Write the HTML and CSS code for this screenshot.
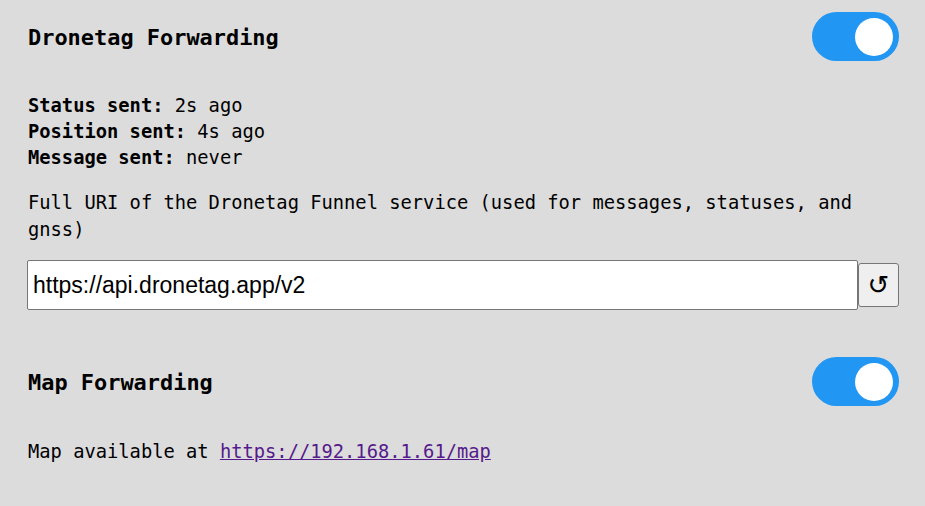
FILE: index.html
```html
<!DOCTYPE html>
<html lang="en">
  <head>
    <meta charset="UTF-8" />
    <meta name="viewport" content="width=device-width, initial-scale=1.0" />
    <title>Forwarding</title>
    <link rel="stylesheet" href="styles.css">
  </head>
  <body>
    <div class="section">
      <div class="section-header">
        <h3>Dronetag Forwarding</h3>
        <label class="toggle">
          <input type="checkbox" checked />
          <span class="slider"></span>
        </label>
      </div>
      <div class="status">
        <div><b>Status sent:</b> 2s ago</div>
        <div><b>Position sent:</b> 4s ago</div>
        <div><b>Message sent:</b> never</div>
      </div>
      <p class="hint">Full URI of the Dronetag Funnel service (used for messages, statuses, and gnss)</p>
      <div class="uri-row">
        <input type="text" class="uri-input" value="https://api.dronetag.app/v2" />
        <button class="reset-btn" title="Reset">↺</button>
      </div>
    </div>
    <div class="section section-map">
      <div class="section-header">
        <h3>Map Forwarding</h3>
        <label class="toggle">
          <input type="checkbox" checked />
          <span class="slider"></span>
        </label>
      </div>
      <p class="map-info">Map available at <a href="#map" class="visited">https://192.168.1.61/map</a></p>
    </div>
  </body>
</html>
```

FILE: styles.css
```css
body {
  font-family: "DejaVu Sans Mono", monospace;
  font-size: 18.75px;
  background-color: #dcdcdc;
  color: #000;
  margin: 0;
  padding: 12px 26px 0 27px;
}
.section-header {
  display: flex;
  justify-content: space-between;
  align-items: center;
  height: 49px;
}
.section-header h3 {
  margin: 2px 0 0 1px;
  font-size: 1.17em;
  font-weight: bold;
}
.toggle {
  position: relative;
  display: inline-block;
  width: 87px;
  height: 49px;
}
.toggle input {
  opacity: 0;
  width: 0;
  height: 0;
}
.slider {
  position: absolute;
  inset: 0;
  background-color: #2196f3;
  border-radius: 25px;
}
.slider::before {
  content: "";
  position: absolute;
  width: 38px;
  height: 38px;
  right: 6px;
  top: 5.5px;
  background-color: #fff;
  border-radius: 50%;
}
.status {
  margin: 32px 0 0 1px;
  line-height: 26px;
}
.hint {
  margin: 19px 0 0 1px;
  line-height: 26.5px;
}
.uri-row {
  display: flex;
  align-items: center;
  margin-top: 17px;
}
.uri-input {
  flex: 1;
  height: 50px;
  box-sizing: border-box;
  border: 1px solid #767676;
  border-radius: 2px;
  padding: 0 5px;
  font-family: "Liberation Sans", Arial, sans-serif;
  font-size: 23px;
  background: #fff;
  color: #000;
}
.reset-btn {
  width: 41px;
  height: 44px;
  background-color: #efefef;
  border: 1px solid #767676;
  border-radius: 3px;
  font-family: "DejaVu Sans", sans-serif;
  font-size: 26px;
  line-height: 1;
  color: #000;
  padding: 0;
}
.section-map {
  margin-top: 47px;
}
.map-info {
  margin: 33px 0 0 1px;
  line-height: 26px;
}
.map-info a {
  color: #551a8b;
}
```
